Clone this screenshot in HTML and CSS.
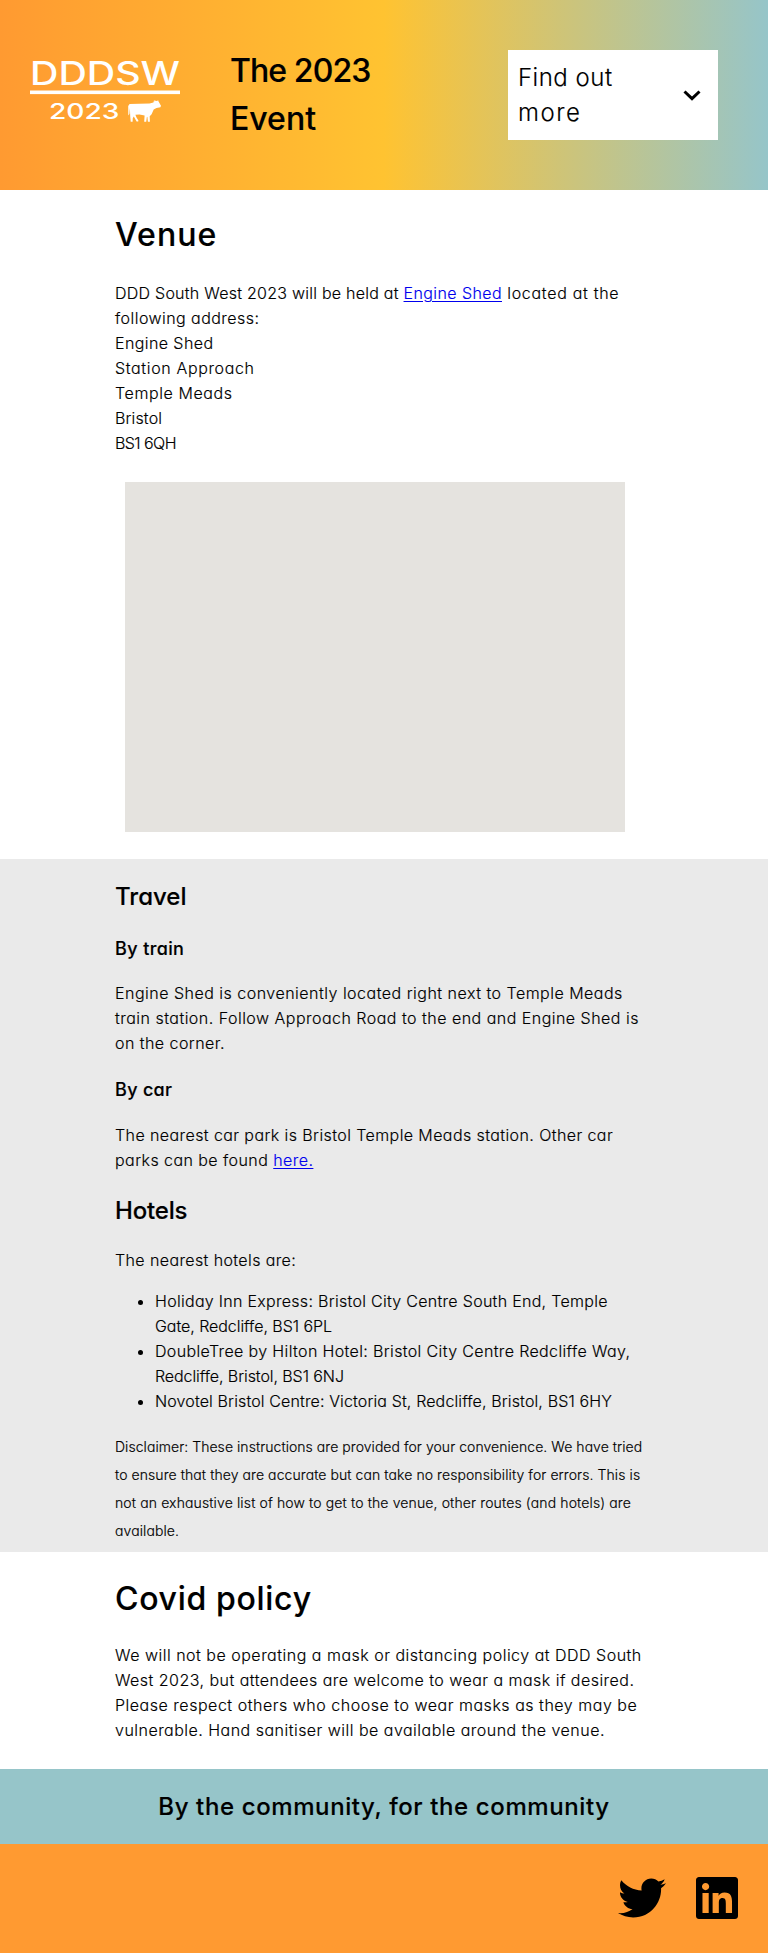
FILE: index.html
```
<!DOCTYPE html>
<html lang="en">
<head>
<meta charset="utf-8">
<title>DDD South West 2023 - Venue</title>
<link rel="stylesheet" href="styles.css">
</head>
<body>
<header class="header">
  <svg class="logo" width="150" height="66" viewBox="0 0 150 66" fill="#fff" role="img" aria-label="DDDSW 2023">
    <text class="logo-text" x="0" y="24.5" font-size="32" textLength="150" lengthAdjust="spacingAndGlyphs">DDDSW</text>
    <rect x="0" y="30.5" width="150" height="3.6"/>
    <text class="logo-text" x="19" y="59.3" font-size="21.5" textLength="70.5" lengthAdjust="spacingAndGlyphs">2023</text>
    <path d="M98.2 46 L99.6 44 L119.5 43.6 L122.5 42.8 L124.6 41.8 L123.2 41.2 L124.3 40.4 L127 40.9 L128.2 40.3 L128.4 41.2 L129.4 42.9 L131 45.8 L130.4 47.2 L126.5 48 L123.7 49.6 L121.6 54.2 L119.7 56.2 L119.9 61.8 L117.9 61.8 L117.4 56.9 L116.9 56.7 L116.2 61.8 L114.2 61.8 L114.6 55.4 L109.5 54.6 L105.4 54.8 L106.5 57.4 L108.4 60.6 L108.2 61.5 L106.6 61.5 L103.8 56.6 L102.8 58 L102.6 61.8 L100.7 61.8 L100.2 56 L99.9 48 L99.4 54 L98.3 55.6 Z"/>
  </svg>
  <div class="title"><span class="line ls-n90">The 2023</span><span class="line">Event</span></div>
  <div class="menu">
    <div><span class="line ls-49">Find out</span><span class="line ls-156">more</span></div>
    <svg width="18" height="11" viewBox="0 0 18 11" fill="none" stroke="#000" stroke-width="3"><path d="M1.5 1.5 9 8.6 16.5 1.5"/></svg>
  </div>
</header>
<main>
  <section class="section venue">
    <h1 class="ls-109">Venue</h1>
    <p>
      <span class="line"><span class="ls-23">DDD South West 2023 will be held at </span><a class="ls-41" href="#">Engine Shed</a><span class="ls-71"> located at the</span></span>
      <span class="line ls-45">following address:</span>
      <span class="line ls-41">Engine Shed</span>
      <span class="line ls-65">Station Approach</span>
      <span class="line ls-59">Temple Meads</span>
      <span class="line ls-14">Bristol</span>
      <span class="line ls-n57">BS1 6QH</span>
    </p>
    <div class="map"></div>
  </section>
  <section class="section travel">
    <h2>Travel</h2>
    <h3 class="ls-39">By train</h3>
    <p>
      <span class="line ls-48">Engine Shed is conveniently located right next to Temple Meads</span>
      <span class="line ls-47">train station. Follow Approach Road to the end and Engine Shed is</span>
      <span class="line ls-45">on the corner.</span>
    </p>
    <h3 class="by-car ls-31">By car</h3>
    <p>
      <span class="line ls-40">The nearest car park is Bristol Temple Meads station. Other car</span>
      <span class="line ls-44">parks can be found <a href="#">here.</a></span>
    </p>
    <h2 class="hotels ls-n17">Hotels</h2>
    <p class="intro"><span class="line ls-39">The nearest hotels are:</span></p>
    <ul>
      <li><span class="line ls-28">Holiday Inn Express: Bristol City Centre South End, Temple</span><span class="line ls-n5">Gate, Redcliffe, BS1 6PL</span></li>
      <li><span class="line ls-35">DoubleTree by Hilton Hotel: Bristol City Centre Redcliffe Way,</span><span class="line ls-n8">Redcliffe, Bristol, BS1 6NJ</span></li>
      <li><span class="line ls-13">Novotel Bristol Centre: Victoria St, Redcliffe, Bristol, BS1 6HY</span></li>
    </ul>
    <p class="disclaimer">
      <span class="line ls-5">Disclaimer: These instructions are provided for your convenience. We have tried</span>
      <span class="line ls-8">to ensure that they are accurate but can take no responsibility for errors. This is</span>
      <span class="line ls-13">not an exhaustive list of how to get to the venue, other routes (and hotels) are</span>
      <span class="line ls-10">available.</span>
    </p>
  </section>
  <section class="section covid">
    <h1 class="ls-69">Covid policy</h1>
    <p>
      <span class="line ls-49">We will not be operating a mask or distancing policy at DDD South</span>
      <span class="line ls-46">West 2023, but attendees are welcome to wear a mask if desired.</span>
      <span class="line ls-51">Please respect others who choose to wear masks as they may be</span>
      <span class="line ls-47">vulnerable. Hand sanitiser will be available around the venue.</span>
    </p>
  </section>
</main>
<div class="tagline"><h2 class="ls-61">By the community, for the community</h2></div>
<footer class="footer">
  <svg width="48" height="48" viewBox="0 0 512 512"><path d="M459.37 151.716c.325 4.548.325 9.097.325 13.645 0 138.72-105.583 298.558-298.558 298.558-59.452 0-114.68-17.219-161.137-47.106 8.447.974 16.568 1.299 25.34 1.299 49.055 0 94.213-16.568 130.274-44.832-46.132-.975-84.792-31.188-98.112-72.772 6.498.974 12.995 1.624 19.818 1.624 9.421 0 18.843-1.3 27.614-3.573-48.081-9.747-84.143-51.98-84.143-102.985v-1.299c13.969 7.797 30.214 12.67 47.431 13.319-28.264-18.843-46.781-51.005-46.781-87.391 0-19.492 5.197-37.36 14.294-52.954 51.655 63.675 129.3 105.258 216.365 109.807-1.624-7.797-2.599-15.918-2.599-24.04 0-57.828 46.782-104.934 104.934-104.934 30.213 0 57.502 12.67 76.67 33.137 23.715-4.548 46.456-13.32 66.599-25.34-7.798 24.366-24.366 44.833-46.132 57.827 21.117-2.273 41.584-8.122 60.426-16.243-14.292 20.791-32.161 39.308-52.628 54.253z"/></svg>
  <svg width="42" height="48" viewBox="0 0 448 512"><path d="M416 32H31.9C14.3 32 0 46.5 0 64.3v383.4C0 465.5 14.3 480 31.9 480H416c17.6 0 32-14.5 32-32.3V64.3c0-17.8-14.4-32.3-32-32.3zM135.4 416H69V202.2h66.5V416zm-33.2-243c-21.3 0-38.5-17.3-38.5-38.5S80.9 96 102.2 96c21.2 0 38.5 17.3 38.5 38.5 0 21.3-17.2 38.5-38.5 38.5zm282.1 243h-66.4V312c0-24.8-.5-56.7-34.5-56.7-34.6 0-39.9 27-39.9 54.9V416h-66.4V202.2h63.7v29.2h.9c8.9-16.8 30.6-34.5 62.9-34.5 67.2 0 79.7 44.3 79.7 101.9V416z"/></svg>
</footer>
</body>
</html>
```
FILE: styles.css
```
body {
  margin: 0;
  background: #fff;
  color: #000;
  font: 300 16px/25px Inter, sans-serif;
  font-feature-settings: "cv11";
  -webkit-text-stroke: .15px;
}
h1, h2, h3, p, ul { margin: 0; }
h1, h2, h3 { font-weight: 500; }
h1 { font-size: 32px; line-height: 48px; }
h2 { font-size: 24px; line-height: 36px; }
h3 { font-size: 18px; line-height: 27px; }
a { color: #0000ee; text-underline-offset: 2px; }
.line { display: block; white-space: pre; }

.header {
  box-sizing: border-box;
  height: 190px;
  padding: 0 50px 0 30px;
  display: flex;
  align-items: center;
  background: linear-gradient(90deg, #ff9a31, #ffc331 50%, #96c5c9);
}
.logo { margin-top: -4px; overflow: visible; }
.logo-text { font-family: Inter, sans-serif; font-weight: 500; }
.title { margin-left: 50px; font-size: 32px; font-weight: 500; line-height: 48px; }
.menu {
  box-sizing: border-box;
  width: 210px;
  height: 90px;
  margin-left: auto;
  padding: 0 17px 0 10px;
  display: flex;
  align-items: center;
  justify-content: space-between;
  background: #fff;
  font-size: 24px;
  line-height: 35px;
}

.section { padding: 20px 115px 0; }
.venue { padding: 21px 115px 27px; }
.venue p { margin: 22px 0 26px; }
.map { width: 500px; height: 350px; margin-left: 10px; background: #e5e3df; }

.travel { padding-bottom: 7px; background: #eaeaea; }
.travel h3 { margin: 20px 0 19px; }
.travel .hotels { margin: 20px 0 19px; }
.travel ul { margin: 16px 0 19px; padding-left: 40px; }
.travel .by-car { margin-bottom: 20px; }
.disclaimer { font-size: 14px; line-height: 28px; }

.covid { padding: 23px 115px 26px; }
.covid p { margin-top: 20px; }

.tagline { height: 75px; display: grid; place-items: center; background: #96c5c9; }
.footer {
  box-sizing: border-box;
  height: 109px;
  padding: 0 30px 2px 0;
  display: flex;
  align-items: center;
  justify-content: flex-end;
  gap: 30px;
  background: #ff9a31;
}

/* Letter spacing, in hundredths of a pixel; "n" is negative */
.ls-n90 { letter-spacing: -.9px; }
.ls-n57 { letter-spacing: -.57px; }
.ls-n17 { letter-spacing: -.17px; }
.ls-n8 { letter-spacing: -.08px; }
.ls-n5 { letter-spacing: -.05px; }
.ls-5 { letter-spacing: .05px; }
.ls-8 { letter-spacing: .08px; }
.ls-10 { letter-spacing: .1px; }
.ls-13 { letter-spacing: .13px; }
.ls-14 { letter-spacing: .14px; }
.ls-23 { letter-spacing: .25px; }
.ls-28 { letter-spacing: .29px; }
.ls-31 { letter-spacing: .31px; }
.ls-35 { letter-spacing: .36px; }
.ls-39 { letter-spacing: .39px; }
.ls-40 { letter-spacing: .41px; }
.ls-41 { letter-spacing: .41px; }
.ls-44 { letter-spacing: .44px; }
.ls-45 { letter-spacing: .45px; }
.ls-46 { letter-spacing: .47px; }
.ls-47 { letter-spacing: .48px; }
.ls-48 { letter-spacing: .49px; }
.ls-49 { letter-spacing: .5px; }
.ls-51 { letter-spacing: .52px; }
.ls-59 { letter-spacing: .59px; }
.ls-61 { letter-spacing: .61px; }
.ls-65 { letter-spacing: .65px; }
.ls-69 { letter-spacing: .69px; }
.ls-71 { letter-spacing: .71px; }
.ls-109 { letter-spacing: 1.09px; }
.ls-156 { letter-spacing: 1.56px; }
```
